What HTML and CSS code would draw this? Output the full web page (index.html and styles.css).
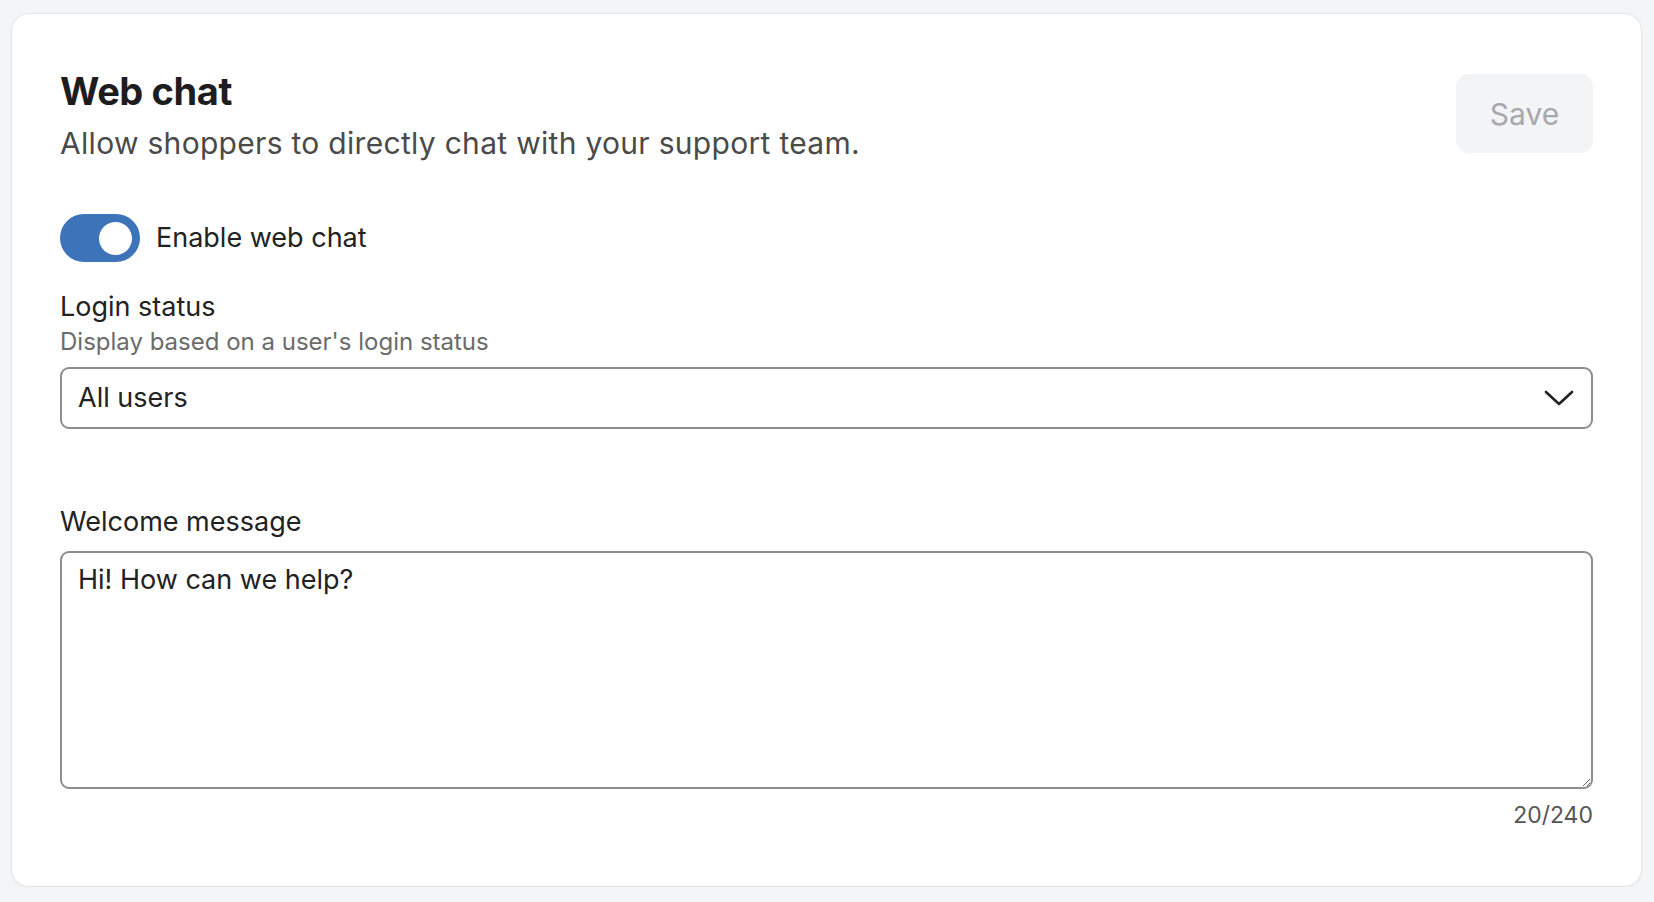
FILE: index.html
```html
<!DOCTYPE html>
<html lang="en">
<head>
<meta charset="utf-8">
<title>Web chat</title>
<link rel="stylesheet" href="styles.css">
</head>
<body>
<main class="card">
  <header class="card-header">
    <div class="titles">
      <h1 class="title">Web chat</h1>
      <p class="subtitle">Allow shoppers to directly chat with your support team.</p>
    </div>
    <button class="save-btn" type="button" disabled>Save</button>
  </header>

  <div class="toggle-row">
    <span class="toggle" role="switch" aria-checked="true"><span class="knob"></span></span>
    <span class="toggle-label">Enable web chat</span>
  </div>

  <div class="field">
    <div class="field-label">Login status</div>
    <div class="field-help">Display based on a user's login status</div>
    <div class="select">
      <span class="select-value">All users</span>
      <svg class="chevron" width="30" height="16" viewBox="0 0 30 16" aria-hidden="true">
        <path d="M2 2 L15 14 L28 2" fill="none" stroke="#222" stroke-width="2.6" stroke-linecap="round" stroke-linejoin="round"/>
      </svg>
    </div>
  </div>

  <div class="field field-welcome">
    <div class="field-label">Welcome message</div>
    <textarea class="textarea" readonly>Hi! How can we help?</textarea>
    <div class="counter">20/240</div>
  </div>
</main>
</body>
</html>
```

FILE: styles.css
```css
* { box-sizing: border-box; }

html, body {
  margin: 0;
  background: #f4f5f7;
}

body {
  padding: 13px 12px 0 11px;
  font-family: Inter, "Noto Sans", "Liberation Sans", sans-serif;
  color: #222;
}

.card {
  background: #fff;
  border: 1px solid #e4e5e8;
  border-radius: 18px;
  box-shadow: 0 1px 3px rgba(0, 0, 0, 0.05);
  padding: 0 48px 57px 48px;
}

.card-header {
  display: flex;
  justify-content: space-between;
  align-items: flex-start;
  padding-top: 54px;
}

.title {
  margin: 0;
  font-size: 38px;
  line-height: 46px;
  font-weight: 700;
  color: #1d1d1f;
  letter-spacing: -0.4px;
}

.subtitle {
  margin: 11px 0 0;
  font-size: 30px;
  line-height: 36px;
  letter-spacing: 0.3px;
  color: #4a4a4a;
}

.save-btn {
  margin-top: 6px;
  width: 137px;
  height: 79px;
  border: none;
  border-radius: 13px;
  background: #f3f4f6;
  color: #a6a8ad;
  font-family: inherit;
  font-size: 30px;
  padding: 0;
}

.toggle-row {
  display: flex;
  align-items: center;
  gap: 16px;
  margin-top: 53px;
}

.toggle {
  width: 80px;
  height: 48px;
  border-radius: 24px;
  background: #3d73b8;
  display: flex;
  align-items: center;
  justify-content: flex-end;
  padding-right: 8px;
}

.knob {
  width: 33px;
  height: 33px;
  border-radius: 50%;
  background: #fff;
}

.toggle-label {
  font-size: 27px;
  line-height: 34px;
  color: #222;
}

.field {
  margin-top: 28px;
}

.field-label {
  font-size: 27px;
  line-height: 34px;
  color: #222;
}

.field-help {
  margin-top: 3px;
  font-size: 24px;
  line-height: 30px;
  color: #6b6b6b;
}

.select {
  margin-top: 10px;
  height: 62px;
  border: 2px solid #8d8d8d;
  border-radius: 9px;
  display: flex;
  align-items: center;
  justify-content: space-between;
  padding: 0 17px 0 16px;
}

.select-value {
  font-size: 27px;
  line-height: 34px;
  color: #222;
}

.chevron {
  display: block;
}

.field-welcome {
  margin-top: 76px;
}

.textarea {
  display: block;
  width: 100%;
  margin-top: 12px;
  height: 238px;
  border: 2px solid #8d8d8d;
  border-radius: 9px;
  padding: 10px 16px;
  font-family: inherit;
  font-size: 27px;
  line-height: 34px;
  color: #222;
  background: #fff;
  resize: vertical;
  outline: none;
}

.counter {
  margin-top: 12px;
  text-align: right;
  font-size: 23px;
  line-height: 28px;
  color: #555;
}
```
